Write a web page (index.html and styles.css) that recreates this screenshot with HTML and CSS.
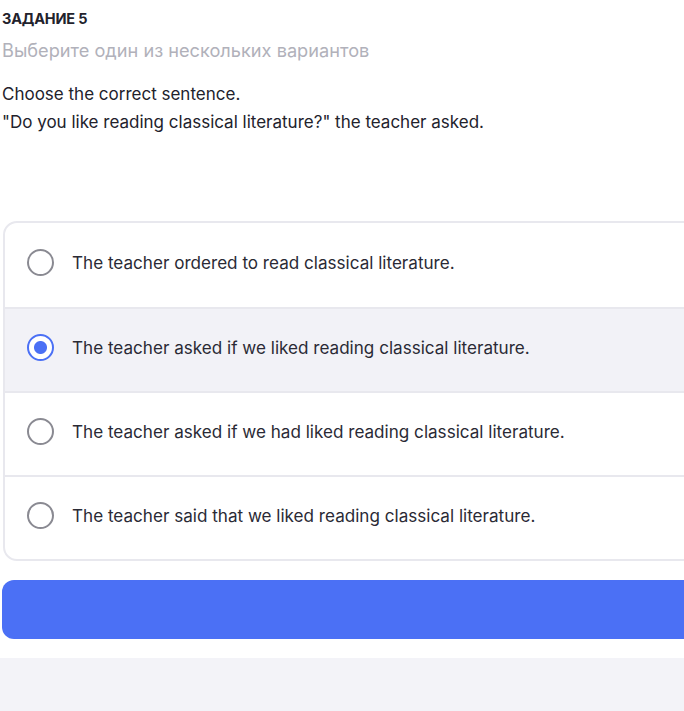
FILE: index.html
```html
<!DOCTYPE html>
<html lang="ru">
<head>
    <meta charset="UTF-8">
    <meta name="viewport" content="width=device-width, initial-scale=1.0">
    <title>Задание 5</title>
    <link rel="stylesheet" href="styles.css">
</head>
<body>
    <div class="task">
        <h1 class="task-title">ЗАДАНИЕ 5</h1>
        <p class="task-hint">Выберите один из нескольких вариантов</p>

        <div class="task-question">
            <p>Choose the correct sentence.</p>
            <p>"Do you like reading classical literature?" the teacher asked.</p>
        </div>

        <div class="options">
            <label class="option">
                <input type="radio" name="answer">
                <span class="radio"></span>
                <span class="option-text">The teacher ordered to read classical literature.</span>
            </label>
            <label class="option selected">
                <input type="radio" name="answer" checked>
                <span class="radio"></span>
                <span class="option-text">The teacher asked if we liked reading classical literature.</span>
            </label>
            <label class="option">
                <input type="radio" name="answer">
                <span class="radio"></span>
                <span class="option-text">The teacher asked if we had liked reading classical literature.</span>
            </label>
            <label class="option">
                <input type="radio" name="answer">
                <span class="radio"></span>
                <span class="option-text">The teacher said that we liked reading classical literature.</span>
            </label>
        </div>

        <button class="submit" type="button"></button>
    </div>
    <div class="footer"></div>
</body>
</html>
```

FILE: styles.css
```css
:root {
    --text-color: #22222c;
    --muted-color: #b1b1ba;
    --border-color: #e8e8ee;
    --selected-bg: #f2f2f7;
    --primary-color: #4b70f5;
}

* {
    margin: 0;
    padding: 0;
    box-sizing: border-box;
}

html, body {
    overflow: hidden;
}

body {
    font-family: Inter, 'Noto Sans', sans-serif;
    color: var(--text-color);
    background-color: white;
    width: 760px;
}

.task {
    padding: 10px 0 19px 2px;
}

.task-title {
    font-size: 14.5px;
    font-weight: 700;
    line-height: 18px;
    letter-spacing: -0.2px;
}

.task-hint {
    margin-top: 10px;
    font-size: 18.2px;
    line-height: 24px;
    color: var(--muted-color);
}

.task-question {
    margin-top: 18px;
    font-size: 17px;
    line-height: 28px;
}

.options {
    margin-top: 85px;
    margin-left: 1px;
    border: 2px solid var(--border-color);
    border-radius: 14px;
    overflow: hidden;
}

.option {
    display: flex;
    align-items: center;
    gap: 18px;
    height: 84px;
    padding: 0 0 5px 22px;
    font-size: 17.1px;
    cursor: pointer;
}

.option + .option {
    border-top: 2px solid var(--border-color);
}

.option.selected {
    background-color: var(--selected-bg);
}

.option input {
    display: none;
}

.radio {
    width: 27px;
    height: 27px;
    border: 2.5px solid #8a8a92;
    border-radius: 50%;
    flex-shrink: 0;
}

.option.selected .radio {
    border-color: var(--primary-color);
    background: radial-gradient(circle, var(--primary-color) 0 6px, white 7px);
}

.option-text {
    color: #2a2a35;
}

.submit {
    display: block;
    width: 100%;
    height: 59px;
    margin-top: 19px;
    background-color: var(--primary-color);
    border: none;
    border-radius: 12px;
    cursor: pointer;
}

.footer {
    height: 60px;
    background-color: #f3f3f8;
}
```
